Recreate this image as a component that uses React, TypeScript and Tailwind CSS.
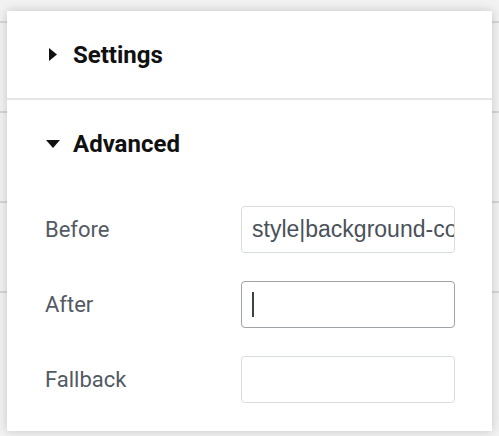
const rows = [
    { label: "Before", value: "style|background-color", focused: false },
    { label: "After", value: "", focused: true },
    { label: "Fallback", value: "", focused: false },
]

const App = () => {
    return (
        <div className="relative w-[499px] h-[436px] overflow-hidden bg-[#f2f2f2] font-['Roboto',sans-serif]">
            {/* list behind the popover */}
            <div className="flex flex-col pt-[21px]">
                <div className="h-[90px] border-t-[2px] border-[#d6d6d6]" />
                <div className="h-[90px] border-t-[2px] border-[#d6d6d6]" />
                <div className="h-[90px] border-t-[2px] border-[#d6d6d6]" />
                <div className="h-[90px] border-t-[2px] border-[#d6d6d6]" />
            </div>

            <div className="absolute left-[7px] top-[11px] w-[485px] h-[420px] bg-white shadow-[0_0_10px_rgba(0,0,0,0.18)]">
                <div className="h-[89px] flex items-center pl-[42px] gap-[16px] border-b-[2px] border-[#e3e5e8]">
                    <svg width="8" height="13" viewBox="0 0 8 13">
                        <path d="M0 0 L8 6.5 L0 13 Z" fill="#111" />
                    </svg>
                    <span className="text-[24px] font-bold text-[#111]">Settings</span>
                </div>

                <div className="flex flex-col">
                    <div className="h-[87px] flex items-center pl-[39px] gap-[13px]">
                        <svg width="14" height="8" viewBox="0 0 14 8">
                            <path d="M0 0 L14 0 L7 8 Z" fill="#111" />
                        </svg>
                        <span className="text-[24px] font-bold text-[#111]">Advanced</span>
                    </div>

                    <div className="flex flex-col gap-[28px] pt-[19px] pl-[38px] pr-[37px]">
                        {rows.map((r) => (
                            <div key={r.label} className="flex items-center justify-between h-[47px]">
                                <span className="text-[22px] text-[#525a63]">{r.label}</span>
                                <div
                                    className={
                                        r.focused
                                            ? "w-[214px] h-[47px] rounded-[4px] border border-[#9ea3a8] flex items-center pl-[10px]"
                                            : "w-[214px] h-[47px] rounded-[4px] border border-[#d9dcdf] flex items-center pl-[10px]"
                                    }
                                >
                                    {r.focused ? (
                                        <span className="w-[2px] h-[25px] bg-[#3a4048]" />
                                    ) : (
                                        <input
                                            readOnly
                                            value={r.value}
                                            className="w-full min-w-0 bg-transparent outline-none text-[23px] text-[#4a5159] font-['Liberation_Sans',Arial,sans-serif]"
                                        />
                                    )}
                                </div>
                            </div>
                        ))}
                    </div>
                </div>
            </div>
        </div>
    )
}
export default App
